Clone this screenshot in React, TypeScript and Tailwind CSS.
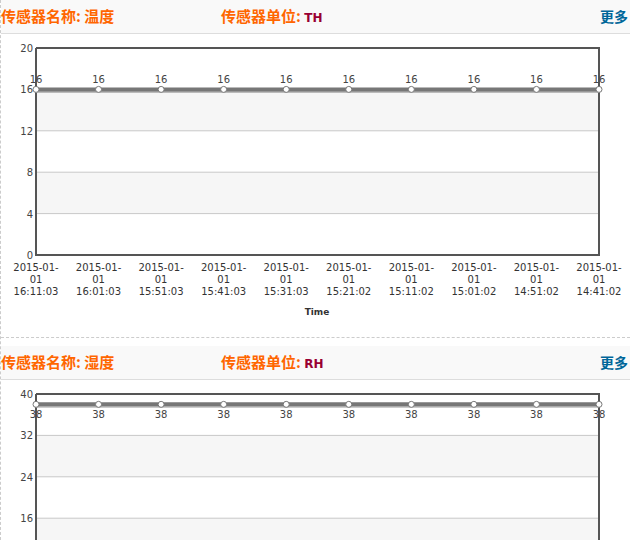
import React from 'react';

const times = [
  '16:11:03', '16:01:03', '15:51:03', '15:41:03', '15:31:03',
  '15:21:02', '15:11:02', '15:01:02', '14:51:02', '14:41:02',
];

function Chart({ value, max }: { value: number; max: number }) {
  const left = 35, right = 598, top = 14, bottom = 221;
  const h = bottom - top;
  const step = (right - left) / 9;
  const y = (v: number) => bottom - (v / max) * h;
  const ticks = [0, 1, 2, 3, 4, 5].map((i) => (max / 5) * i);
  const vy = y(value);
  // label goes under the line when it sits too close to the top
  const labelY = vy - top < 20 ? vy + 14 : vy - 6;
  return (
    <svg width={630} height={300} className="block" style={{ fontFamily: 'Verdana, "DejaVu Sans", sans-serif' }}>
      <rect x={left} y={y(max * 0.8)} width={right - left} height={h / 5} fill="#f6f6f6" />
      <rect x={left} y={y(max * 0.4)} width={right - left} height={h / 5} fill="#f6f6f6" />
      {ticks.slice(1, 5).map((t) => (
        <line key={t} x1={left} x2={right} y1={y(t)} y2={y(t)} stroke="#c8c8c8" strokeWidth={1} />
      ))}
      {ticks.map((t) => (
        <text key={t} x={32} y={y(t) + 4} fontSize={10} fill="#444" textAnchor="end">{t}</text>
      ))}
      <polyline points={`${left},${top} ${right},${top} ${right},${bottom} ${left},${bottom} ${left},${top}`} fill="none" stroke="#555" strokeWidth={2} />
      <line x1={left} x2={right} y1={vy + 2} y2={vy + 2} stroke="#bbb" strokeWidth={3} />
      <line x1={left} x2={right} y1={vy} y2={vy} stroke="#777" strokeWidth={4} />
      {times.map((t, i) => {
        const x = left + i * step;
        return (
          <g key={t}>
            <circle cx={x} cy={vy} r={3} fill="#fff" stroke="#777" strokeWidth={1} />
            <text x={x} y={labelY} fontSize={10} fill="#444" textAnchor="middle">{value}</text>
            <text x={x} y={237} fontSize={10} fill="#333" textAnchor="middle">2015-01-</text>
            <text x={x} y={249} fontSize={10} fill="#333" textAnchor="middle">01</text>
            <text x={x} y={261} fontSize={10} fill="#333" textAnchor="middle">{t}</text>
          </g>
        );
      })}
      <text x={316} y={281} fontSize={9} fontWeight="bold" fill="#333" textAnchor="middle">Time</text>
    </svg>
  );
}

function Section({ name, unit, value, max }: { name: string; unit: string; value: number; max: number }) {
  return (
    <div className="mb-2">
      <div className="h-[34px] bg-[#f9f9f9] border-b border-[#dddddd] flex items-center font-bold" style={{ fontFamily: '"Noto Sans CJK SC", sans-serif' }}>
        <div className="w-[220px] text-[15px] text-[#ff6600]">传感器名称: {name}</div>
        <div className="flex-1 text-[15px] text-[#ff6600]">
          传感器单位: <span className="text-[12px] text-[#990033]" style={{ fontFamily: 'Verdana, "DejaVu Sans", sans-serif' }}>{unit}</span>
        </div>
        <div className="text-[14px] text-[#006699] pr-[2px]">更多</div>
      </div>
      <div className="border-b border-dashed border-[#cccccc] h-[304px] overflow-hidden">
        <Chart value={value} max={max} />
      </div>
    </div>
  );
}

export default function App() {
  return (
    <div className="w-[630px] h-[540px] overflow-hidden bg-white border-l border-dashed border-[#cccccc]">
      <Section name="温度" unit="TH" value={16} max={20} />
      <Section name="湿度" unit="RH" value={38} max={40} />
    </div>
  );
}
